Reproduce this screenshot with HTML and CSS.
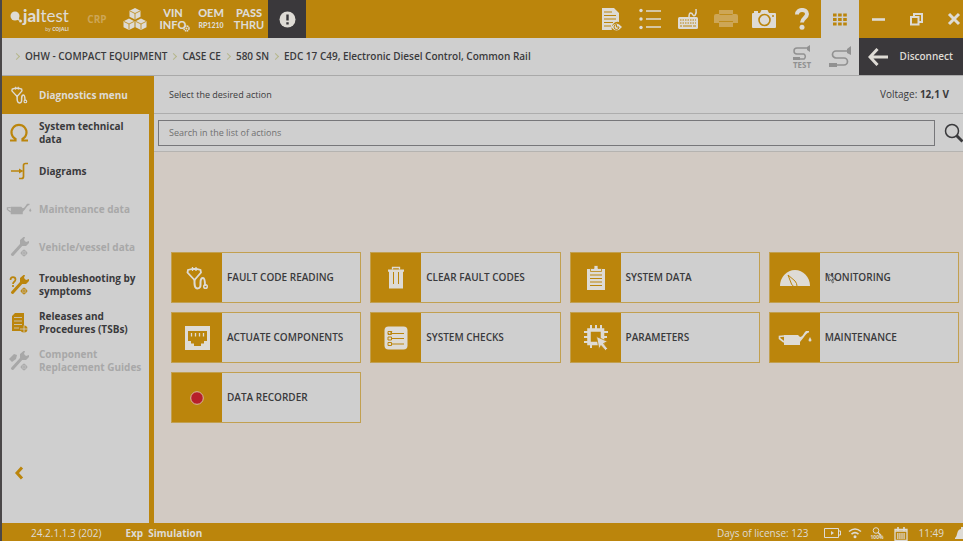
FILE: index.html
```
<!DOCTYPE html>
<html lang="en">
<head>
  <meta charset="utf-8">
  <title>Jaltest - Diagnostics menu</title>
  <link rel="stylesheet" href="styles.css">
</head>
<body>
  <header class="topbar">
    <div class="logo">
      <svg class="logo-mark" width="13" height="14" viewBox="0 0 13 14"><circle cx="5" cy="5" r="4.500" fill="currentColor"/><circle cx="10.500" cy="10" r="1.500" fill="currentColor"/><path d="M6 6l3 3" stroke="currentColor" stroke-width="2"/></svg>
      <div class="logo-text">
        <div class="logo-name"><b>jal</b>test</div>
        <div class="logo-by">by <b>COJALI</b></div>
      </div>
    </div>
    <button class="tool faded">CRP</button>
    <button class="tool" aria-label="Modules">
      <svg width="24" height="23" viewBox="0 0 24 23"><g fill="currentColor"><path d="M12 0l5.500 2.700v6L12 11.500 6.500 8.700v-6z"/><path d="M6 10.500l5.500 2.700v6L6 22 .5 19.200v-6z"/><path d="M18 10.500l5.500 2.700v6L18 22l-5.500-2.800v-6z"/></g><path d="M7 3l5 2.500L17 3M12 5.500V11M1 13.500L6 16l5-2.500M6 16v5.500M13 13.500l5 2.500 5-2.500M18 16v5.500" fill="none" stroke="#bb850c" stroke-width=".8"/></svg>
    </button>
    <button class="tool stacked"><span>VIN</span><span>INFO</span>
      <svg class="vin-gear" width="7" height="7" viewBox="0 0 7 7"><circle cx="3.500" cy="3.500" r="2.500" fill="none" stroke="currentColor" stroke-width="1.500" stroke-dasharray="1.500 .5"/><circle cx="3.500" cy="3.500" r="1" fill="currentColor"/></svg>
    </button>
    <button class="tool stacked"><span>OEM</span><span class="small">RP1210</span></button>
    <button class="tool stacked"><span>PASS</span><span class="thin">THRU</span></button>
    <button class="tool dark" aria-label="Warnings">
      <svg width="17" height="17" viewBox="0 0 17 17"><circle cx="8.500" cy="8.500" r="8" fill="currentColor"/><path d="M8.500 3.500v6M8.500 11.300v2.200" stroke="#3a383b" stroke-width="2.400"/></svg>
    </button>

    <div class="tools-right">
      <button class="tool" aria-label="Report">
        <svg width="22" height="25" viewBox="0 0 22 25"><path d="M1 1h12l5 5v9a6 6 0 0 0-7 8H1z" fill="currentColor"/><path d="M3 5h8M3 8.500h12M3 12h12M3 15.500h9M3 19h7" stroke="#bb850c" stroke-width="1.200"/><path d="M10 20q5.500-7 11 0-5.500 7-11 0z" fill="currentColor"/><path d="M15.500 17.500v2.500h2.500a2.500 2.500 0 1 1-2.500-2.500z" fill="none" stroke="#bb850c"/></svg>
      </button>
      <button class="tool" aria-label="List">
        <svg width="22" height="22" viewBox="0 0 22 22"><path d="M7 3h15M7 11h15M7 19h15" stroke="currentColor" stroke-width="1.600"/><circle cx="2" cy="2.500" r="1.700" fill="currentColor"/><circle cx="2" cy="11" r="1.700" fill="currentColor"/><circle cx="2" cy="19.500" r="1.700" fill="currentColor"/></svg>
      </button>
      <button class="tool" aria-label="Keyboard">
        <svg width="22" height="22" viewBox="0 0 22 22"><rect x="1" y="9" width="20" height="12" rx="1.500" fill="currentColor"/><path d="M3 12h16M3 15h16" stroke="#bb850c" stroke-dasharray="1.500 1"/><path d="M3 18h2M6 18h9M16 18h3" stroke="#bb850c"/><path d="M12 9c0-6 3-4 4-2s4 0 3-6" fill="none" stroke="currentColor" stroke-width="1.500"/></svg>
      </button>
      <button class="tool faded" aria-label="Print" disabled>
        <svg width="24" height="18" viewBox="0 0 24 18"><path d="M5 0h14v4h3a2 2 0 0 1 2 2v7h-5v4H5v-4H0V6a2 2 0 0 1 2-2h3z" fill="currentColor"/><path d="M5.500 4.500h13M5 11.500h14" stroke="#bb850c" stroke-width=".8"/></svg>
      </button>
      <button class="tool" aria-label="Camera">
        <svg width="24" height="20" viewBox="0 0 24 20"><path d="M1 4h1V2h4v2h2l1.500-3h6L17 4h6a1 1 0 0 1 1 1v13a1 1 0 0 1-1 1H1a1 1 0 0 1-1-1V5a1 1 0 0 1 1-1z" fill="currentColor"/><circle cx="12.500" cy="11" r="5.500" fill="none" stroke="#bb850c" stroke-width="1.600"/><circle cx="21" cy="7" r="1" fill="#bb850c"/></svg>
      </button>
      <button class="tool" aria-label="Help">
        <svg width="14" height="22" viewBox="0 0 14 22"><path d="M2 6.500c0-6 10-6 10-.5 0 4-5 4-5 8.500" fill="none" stroke="currentColor" stroke-width="4"/><circle cx="7" cy="19.300" r="2.500" fill="currentColor"/></svg>
      </button>
      <button class="tool light" aria-label="Applications">
        <svg width="14" height="13" viewBox="0 0 14 13"><path d="M0 2h14M0 6.500h14M0 11h14" stroke="currentColor" stroke-width="3" stroke-dasharray="3.600 1.500"/></svg>
      </button>
      <button class="tool" aria-label="Minimize">
        <svg width="13" height="13" viewBox="0 0 13 13"><path d="M0 6.500h13" stroke="currentColor" stroke-width="2.600"/></svg>
      </button>
      <button class="tool" aria-label="Restore">
        <svg width="13" height="13" viewBox="0 0 13 13"><path d="M4 4V1h8v8H9" fill="none" stroke="currentColor" stroke-width="2"/><path d="M1 4h7.500v7.500H1z" fill="none" stroke="currentColor" stroke-width="2"/></svg>
      </button>
      <button class="tool close" aria-label="Close">
        <svg width="14" height="14" viewBox="0 0 14 14"><path d="M2 2l10 10M12 2L2 12" stroke="currentColor" stroke-width="3"/></svg>
      </button>
    </div>
  </header>

  <div class="pathbar">
    <nav class="breadcrumb">
      <a href="#">OHW - COMPACT EQUIPMENT</a>
      <a href="#">CASE CE</a>
      <a href="#">580 SN</a>
      <a href="#">EDC 17 C49, Electronic Diesel Control, Common Rail</a>
    </nav>
    <button class="cable" aria-label="Cable test">
      <svg width="20" height="24" viewBox="0 0 20 24"><path d="M16 3H5a3 3 0 0 0 0 6h7a3 3 0 0 1 0 5H7" fill="none" stroke="currentColor" stroke-width="1.500"/><path d="M15 2l3-2v7l-3-2zM1 12h7v3H1z" fill="currentColor"/><text x="10" y="23" text-anchor="middle" class="cable-text">TEST</text></svg>
    </button>
    <button class="cable" aria-label="Cable connection">
      <svg width="24" height="22" viewBox="0 0 24 22"><path d="M20 5H8a3.500 3.500 0 0 0 0 7h8a3.500 3.500 0 0 1 0 7H8" fill="none" stroke="currentColor" stroke-width="1.700"/><path d="M19 3l4-3v9l-4-2zM1 17h8v4H1z" fill="currentColor"/></svg>
    </button>
    <button class="disconnect">
      <svg width="20" height="18" viewBox="0 0 20 18"><path d="M9.500 1L2 9l7.500 8M2 9h18" fill="none" stroke="currentColor" stroke-width="3"/></svg>
      Disconnect
    </button>
  </div>

  <div class="main">
    <nav class="sidebar">
      <a href="#" class="item active">
        <svg width="18" height="18" viewBox="0 0 24 24"><use href="#stetho"/></svg>
        <span>Diagnostics menu</span>
      </a>
      <a href="#" class="item">
        <svg width="22" height="22" viewBox="0 0 22 22"><path d="M2 18.500h5.500v-1.500a7.500 7.500 0 1 1 7 0v1.500H20" fill="none" stroke="currentColor" stroke-width="2.200"/></svg>
        <span>System technical data</span>
      </a>
      <a href="#" class="item">
        <svg width="22" height="22" viewBox="0 0 22 22"><path d="M3 11h11M20 3.500h-2.500q-2 0-2 2v11q0 2-2 2H11" fill="none" stroke="currentColor" stroke-width="1.700"/><path d="M11 8.500l4.500 2.500-4.500 2.500z" fill="currentColor"/></svg>
        <span>Diagrams</span>
      </a>
      <a href="#" class="item off">
        <svg width="26" height="12" viewBox="0 0 34 16"><use href="#oilcan"/></svg>
        <span>Maintenance data</span>
      </a>
      <a href="#" class="item off">
        <svg width="22" height="22" viewBox="0 0 22 22"><use href="#wrench"/></svg>
        <span>Vehicle/vessel data</span>
      </a>
      <a href="#" class="item">
        <svg width="22" height="22" viewBox="0 0 22 22"><use href="#wrench"/><path d="M2.500 6c0-4 5-3.500 5-.5 0 2.500-2.500 2-2.500 4.500M5 11v2" fill="none" stroke="currentColor" stroke-width="1.700"/></svg>
        <span>Troubleshooting by symptoms</span>
      </a>
      <a href="#" class="item">
        <svg width="22" height="22" viewBox="0 0 22 22"><path d="M7 1h9v14h-3v4H4V4z" fill="currentColor"/><path d="M6 5.500h8M6 9h8M6 12.500h8M6 16h5" stroke="#cfcfcf" stroke-width=".8"/><circle cx="16" cy="17" r="3.500" fill="currentColor"/><path d="M12 17h8M16 13.500v7" stroke="#cfcfcf" stroke-width=".8"/></svg>
        <span>Releases and Procedures (TSBs)</span>
      </a>
      <a href="#" class="item off">
        <svg width="22" height="22" viewBox="0 0 22 22"><use href="#wrench"/><path d="M1 9l5-5 3 1-1 4-4 3z" fill="currentColor"/></svg>
        <span>Component Replacement Guides</span>
      </a>
      <button class="collapse" aria-label="Collapse menu">
        <svg width="10" height="14" viewBox="0 0 10 14"><path d="M8 1.500L3 7l5 5.500" fill="none" stroke="currentColor" stroke-width="3"/></svg>
      </button>
    </nav>

    <main class="content">
      <div class="infobar">
        <span class="hint">Select the desired action</span>
        <span>Voltage: <b>12,1 V</b></span>
      </div>
      <form class="search">
        <input type="text" placeholder="Search in the list of actions" aria-label="Search in the list of actions">
        <button type="button" aria-label="Search">
          <svg width="19" height="20" viewBox="0 0 19 20"><circle cx="8" cy="8" r="6.500" fill="none" stroke="currentColor" stroke-width="1.500"/><path d="M12.500 12.500l6 6" stroke="currentColor" stroke-width="3"/></svg>
        </button>
      </form>

      <div class="actions">
        <button class="card">
          <span class="card-icon"><svg width="24" height="24" viewBox="0 0 24 24"><use href="#stetho"/></svg></span>
          <span>FAULT CODE READING</span>
        </button>
        <button class="card">
          <span class="card-icon"><svg width="18" height="24" viewBox="0 0 18 24"><path d="M1 3.500h16v2.200H1zM2 5h14v17.500H2z" fill="currentColor"/><path d="M5.500 3.500V1.500h7v2" fill="none" stroke="currentColor" stroke-width="1.300"/><path d="M6.500 6v12M11.500 6v12" stroke="#bb850c"/></svg></span>
          <span>CLEAR FAULT CODES</span>
        </button>
        <button class="card">
          <span class="card-icon"><svg width="18" height="27" viewBox="0 0 18 27"><path d="M0 5h18v21H0z" fill="currentColor"/><path d="M3.500 7.500v-3H7V1.500h4v3h3.500v3z" fill="currentColor" stroke="#bb850c" stroke-width=".8"/><path d="M3 11h12M3 14.500h12M3 18h12M3 21.500h12" stroke="#bb850c"/></svg></span>
          <span>SYSTEM DATA</span>
        </button>
        <button class="card">
          <span class="card-icon"><svg width="30" height="18" viewBox="0 0 30 18"><path d="M0 17a15 16 0 0 1 30 0z" fill="currentColor"/><path d="M8 6l3.500 9q1 2 2 2M8 6l7 6q2 2.500 2 5" fill="none" stroke="#bb850c"/></svg></span>
          <span>MONITORING</span>
          <svg class="pointer" width="8" height="11" viewBox="0 0 8 11"><path d="M1 1v7l2-1.500L4.500 10l1-.5L4.300 6H7z" fill="#cfcfcf" stroke="#3a3a3a" stroke-width=".6"/></svg>
        </button>
        <button class="card">
          <span class="card-icon"><svg width="25" height="24" viewBox="0 0 25 24"><path d="M0 0h25v24H0z" fill="currentColor"/><path d="M3 5h19v10h-3v2.500h-3V20H9v-2.500H6V15H3z" fill="#bb850c"/><path d="M6.500 7v3.500M10.500 7v3.500M14.500 7v3.500M18.500 7v3.500" stroke="currentColor" stroke-width="1.300"/></svg></span>
          <span>ACTUATE COMPONENTS</span>
        </button>
        <button class="card">
          <span class="card-icon"><svg width="24" height="24" viewBox="0 0 24 24"><rect x=".5" y=".5" width="23" height="23" rx="4" fill="currentColor"/><path d="M4 5.500h3.500v3H4zM4 11h3.500v3H4zM4 16.500h3.500v3H4zM8 7.500h12M8 12.500h12M8 18h12" fill="none" stroke="#bb850c"/><path d="M4 7l1.500 1.500L8 5" fill="none" stroke="#bb850c"/></svg></span>
          <span>SYSTEM CHECKS</span>
        </button>
        <button class="card">
          <span class="card-icon"><svg width="24" height="26" viewBox="0 0 24 26"><path d="M5 5h13.500v13.500H5z" fill="none" stroke="currentColor" stroke-width="3.600"/><path d="M7 0v4M12 0v4M17 0v4M7 20v3M0 7h4M0 12h4M0 17h4M20 7h4M20 12h3" stroke="currentColor" stroke-width="2"/><path d="M12.500 11.500l11 5-4 2 4 5-2 2-4.500-5-2 3.500z" fill="currentColor" stroke="#bb850c" stroke-width=".8"/></svg></span>
          <span>PARAMETERS</span>
        </button>
        <button class="card">
          <span class="card-icon"><svg width="34" height="16" viewBox="0 0 34 16"><use href="#oilcan"/></svg></span>
          <span>MAINTENANCE</span>
        </button>
        <button class="card">
          <span class="card-icon"><svg width="14" height="14" viewBox="0 0 14 14"><circle cx="7" cy="7" r="6.300" fill="#b71f2a" stroke="#d8b9a0"/></svg></span>
          <span>DATA RECORDER</span>
        </button>
      </div>
    </main>
  </div>

  <footer class="status">
    <span class="version">24.2.1.1.3 (202)</span>
    <b>Exp</b>
    <b>Simulation</b>
    <span class="license">Days of license: 123</span>
    <svg class="battery" width="17" height="12" viewBox="0 0 17 12"><path d="M.5 1.500h14v9H.5zM15 4h1.500v4H15" fill="none" stroke="currentColor"/><path d="M7 4l3 2-3 2z" fill="currentColor"/></svg>
    <svg class="wifi" width="14" height="12" viewBox="0 0 14 12"><path d="M1 4.500q6-5 12 0M3.500 7.200q3.500-3 7 0" fill="none" stroke="currentColor" stroke-width="1.600"/><circle cx="7" cy="9.700" r="1.500" fill="currentColor"/></svg>
    <svg class="zoom" width="16" height="14" viewBox="0 0 16 14"><circle cx="7" cy="3.500" r="2.800" fill="none" stroke="currentColor"/><path d="M9 5.500l3 3" stroke="currentColor" stroke-width="1.400"/><text x="8" y="12" text-anchor="middle" class="zoom-text">100%</text></svg>
    <svg class="calendar" width="14" height="14" viewBox="0 0 14 14"><path d="M1 2.500h12v11H1z" fill="none" stroke="currentColor" stroke-width="1.300"/><path d="M1 4h12M4 0v4M10 0v4" stroke="currentColor" stroke-width="1.600"/><path d="M3 7h8M3 9h8M3 11h8" stroke="currentColor" stroke-width="1.300" stroke-dasharray="1.600 .5"/></svg>
    <span class="clock">11:49</span>
    <svg class="bell" width="8" height="14" viewBox="0 0 8 14"><path d="M0 11c3-2 1-8 6-9V0h2v12H0z" fill="currentColor"/></svg>
  </footer>

  <!-- shapes used more than once -->
  <svg class="defs" width="0" height="0">
    <defs>
      <g id="stetho" fill="none" stroke="currentColor">
        <path d="M7 3L3 4l-.5 2.500L9.500 14 16 6.500 15.500 4l-4-1z" stroke-width="1.800"/>
        <path d="M7.500 1v4M11 1v4" stroke-width="1.300"/>
        <path d="M9.500 13c0 4-.5 9.500 3 9.500s3-3 3-6 .5-4.500 2.500-4.500 2 4 2 8" stroke-width="2"/>
        <circle cx="20.500" cy="20.500" r="1.800" stroke-width="1.500"/>
      </g>
      <g id="oilcan">
        <path d="M6 5h14l2 2c3 0 4-4.500 6-6h3v1.500c-3 .5-5 5-9 9.500v3H6z" fill="currentColor"/>
        <path d="M6 6L1.500 6.500v2L6 12" fill="none" stroke="currentColor" stroke-width="1.600"/>
        <path d="M32 7l1.500 3q0 1.500-1.500 1.500T30.500 10z" fill="currentColor"/>
      </g>
      <g id="wrench">
        <path d="M4.500 18.500L14 8" stroke="currentColor" stroke-width="3" stroke-linecap="round"/>
        <path d="M12 8V4l3.500-3H17l-1 3 2 2 3-1v2l-3 3h-4z" fill="currentColor"/>
        <circle cx="16" cy="17" r="2.500" fill="none" stroke="currentColor"/>
        <path d="M12.500 17h7M16 13.500v7" stroke="currentColor"/>
      </g>
    </defs>
  </svg>
</body>
</html>
```

FILE: styles.css
```
:root {
  --orange: #bb850c;
  --panel: #cfcfcf;
  --dark: #3a383b;
  --text: #3a3a3c;
  --light: #dedbd5;
}

* {
  box-sizing: border-box;
}

body {
  margin: 0;
  height: 100vh;
  display: flex;
  flex-direction: column;
  overflow: hidden;
  border-left: 2px solid #4a4748;
  background-color: var(--panel);
  color: var(--text);
  font-family: "Open Sans", "Noto Sans", sans-serif;
  font-size: 10px;
  line-height: 13px;
}

button {
  padding: 0;
  border: none;
  background: none;
  color: inherit;
  font: inherit;
  cursor: pointer;
}

a {
  color: inherit;
  text-decoration: none;
}

svg {
  display: block;
  flex-shrink: 0;
}

.defs {
  position: absolute;
}

/* top bar */
.topbar {
  display: flex;
  flex-shrink: 0;
  height: 38px;
  background-color: var(--orange);
  color: var(--light);
}

.logo {
  display: flex;
  width: 76px;
  padding: 6px 0 0 8px;
}

.logo-mark {
  margin-top: 5px;
}

.logo-name {
  font-family: Lato, sans-serif;
  font-size: 17px;
  line-height: 20px;
}

.logo-name b {
  font-weight: 900;
}

.logo-by {
  font-size: 5px;
  line-height: 7px;
  text-align: right;
}

.tool {
  display: flex;
  align-items: center;
  justify-content: center;
  width: 38px;
  height: 38px;
  font-weight: bold;
}

.tool.faded {
  color: #cda656;
}

.tool.stacked {
  position: relative;
  flex-direction: column;
  font-family: Lato, sans-serif;
  font-size: 11px;
  font-weight: 900;
  line-height: 12px;
}

.tool.stacked .small {
  font-size: 7px;
}

.tool.stacked .thin {
  font-weight: bold;
}

.vin-gear {
  position: absolute;
  right: 2px;
  bottom: 6px;
}

.tool.dark {
  background-color: var(--dark);
}

.tool.light {
  background-color: var(--panel);
  color: var(--orange);
}

.tool.close {
  width: 28px;
  justify-content: flex-end;
  padding-right: 2px;
}

.tools-right {
  display: flex;
  margin-left: auto;
}

/* breadcrumb bar */
.pathbar {
  display: flex;
  flex-shrink: 0;
  height: 38px;
  border-bottom: 1px solid #a9a9a9;
}

.breadcrumb {
  display: flex;
  flex: 1;
  align-items: center;
  padding-left: 12px;
  font-weight: 600;
}

.breadcrumb a::before {
  content: "";
  display: inline-block;
  width: 4px;
  height: 4px;
  margin: 0 6px 1px 0;
  border: solid #b5b78b;
  border-width: 1px 1px 0 0;
  transform: rotate(45deg);
}

.breadcrumb a + a {
  margin-left: 4px;
}

.cable {
  display: flex;
  align-items: center;
  justify-content: center;
  width: 38px;
  color: #919191;
}

.cable-text {
  font-size: 8px;
  font-weight: bold;
  fill: currentColor;
}

.disconnect {
  display: flex;
  align-items: center;
  gap: 12px;
  padding: 0 10px 0 9px;
  background-color: var(--dark);
  color: var(--light);
  font-weight: 600;
}

/* sidebar */
.main {
  display: flex;
  flex: 1;
  min-height: 0;
}

.sidebar {
  display: flex;
  flex-direction: column;
  width: 152px;
  border-right: 5px solid var(--orange);
}

.item {
  display: flex;
  align-items: center;
  gap: 3px;
  height: 38px;
  padding-right: 4px;
  font-weight: bold;
}

.item svg {
  width: 34px;
  color: var(--orange);
}

.item.active {
  background-color: var(--orange);
  color: var(--light);
}

.item.active svg {
  color: var(--light);
}

.item.off,
.item.off svg {
  color: #a8a8a8;
}

.collapse {
  align-self: flex-start;
  margin: auto 0 43px 12px;
  color: var(--orange);
}

/* content */
.content {
  display: flex;
  flex: 1;
  flex-direction: column;
  min-width: 0;
  background-color: #d2cac3;
}

.infobar {
  display: flex;
  align-items: center;
  justify-content: space-between;
  height: 38px;
  padding: 0 14px 0 15px;
  border-bottom: 1px solid #adadad;
  background-color: var(--panel);
}

.hint {
  font-size: 9px;
}

.search {
  display: flex;
  align-items: center;
  gap: 9px;
  height: 38px;
  padding-left: 4px;
  border-bottom: 1px solid #b5b3b0;
  background-color: var(--panel);
}

.search input {
  flex: 1;
  min-width: 0;
  height: 26px;
  padding: 0 10px;
  border: 1px solid #77777a;
  border-radius: 0;
  background: none;
  color: var(--text);
  font: inherit;
  font-size: 9px;
}

.search input::placeholder {
  color: #6f6f70;
  opacity: 1;
}

.actions {
  display: grid;
  grid-template-columns: repeat(4, 1fr);
  gap: 9px;
  padding: 100px 4px 0 17px;
}

.card {
  position: relative;
  display: flex;
  align-items: center;
  height: 51px;
  border: 1px solid #c2a050;
  background-color: var(--panel);
  font-weight: 600;
  text-align: left;
}

.card-icon {
  display: flex;
  align-items: center;
  justify-content: center;
  width: 50px;
  height: 100%;
  margin-right: 5px;
  background-color: var(--orange);
  color: var(--light);
}

.pointer {
  position: absolute;
  left: 58px;
  top: 20px;
}

/* status bar */
.status {
  display: flex;
  flex-shrink: 0;
  align-items: flex-start;
  height: 18px;
  padding: 4px 0 0 29px;
  overflow: hidden;
  background-color: var(--orange);
  color: var(--light);
}

.version {
  margin-right: 24px;
}

.status b + b {
  margin-left: 5px;
}

.license {
  margin-left: auto;
}

.battery {
  margin-left: 15px;
}

.wifi {
  margin-left: 7px;
}

.zoom {
  margin-left: 7px;
}

.zoom-text {
  font-size: 5px;
  font-weight: bold;
  fill: currentColor;
}

.calendar {
  margin-left: 9px;
}

.clock {
  margin: 0 11px;
}
```
